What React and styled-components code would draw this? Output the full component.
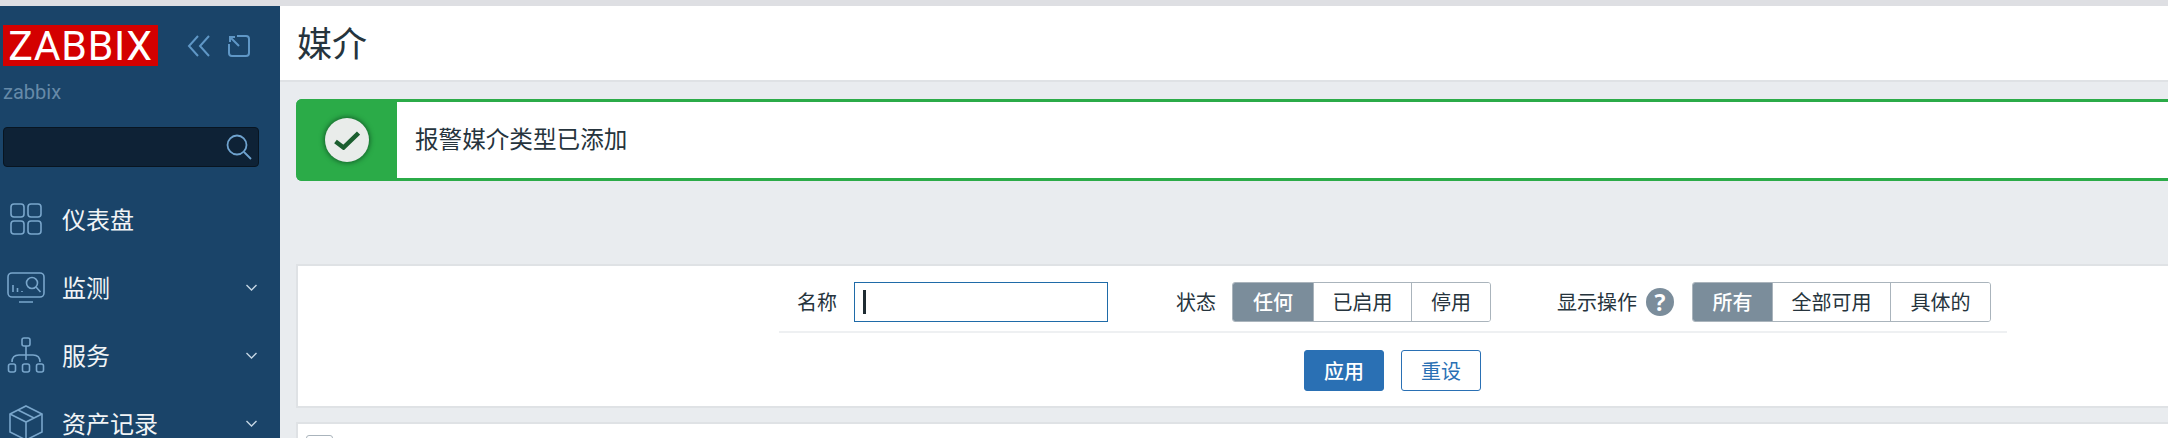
import { createGlobalStyle, styled } from "styled-components";

const GlobalStyle = createGlobalStyle`
  html, body {
    margin: 0;
    height: 100%;
    overflow: hidden;
    background-color: #e9ecef;
  }
  body {
    font-family: "Noto Sans CJK SC", "Noto Sans", sans-serif;
    color: #1f2c33;
  }
  * {
    box-sizing: border-box;
  }
`;

const Page = styled.div`
  display: flex;
  flex-direction: column;
  height: 438px;
  overflow: hidden;
`;

const TopStrip = styled.div`
  flex: none;
  height: 6px;
  background-color: #dedfe3;
`;

const Body = styled.div`
  flex: 1;
  display: flex;
  min-height: 0;
`;

const Sidebar = styled.aside`
  flex: none;
  width: 280px;
  padding: 19px 21px 0 3px;
  background-color: #1a4469;
  overflow: hidden;
`;

const BrandRow = styled.div`
  display: flex;
  align-items: center;
  height: 41px;
`;

const Logo = styled.div`
  width: 155px;
  height: 41px;
  background-color: #d40000;
  color: #fff;
  font-family: Roboto, sans-serif;
  font-size: 41px;
  font-weight: 400;
  line-height: 42px;
  letter-spacing: 0.8px;
  text-align: center;
`;

const BrandIcon = styled.svg`
  flex: none;
  margin-left: ${({ $gap }) => $gap}px;
  fill: none;
  stroke: #5f97c6;
  stroke-width: 2;
`;

const ServerName = styled.div`
  margin-top: 11px;
  height: 30px;
  font-family: Roboto, sans-serif;
  font-size: 20px;
  line-height: 30px;
  color: #668aa8;
`;

const SearchBox = styled.div`
  display: flex;
  align-items: center;
  justify-content: flex-end;
  height: 40px;
  margin-top: 20px;
  padding-right: 6px;
  background-color: #0e2236;
  border: 1px solid #081521;
  border-radius: 4px;
`;

const NavList = styled.nav`
  display: flex;
  flex-direction: column;
  margin-top: 18px;
  margin-right: -21px;
`;

const NavRow = styled.div`
  display: flex;
  align-items: center;
  height: 68px;
  padding-left: 4px;
`;

const NavIconSlot = styled.div`
  flex: none;
  display: flex;
  justify-content: center;
  width: 38px;
  margin-right: 17px;
`;

const NavIcon = styled.svg`
  fill: none;
  stroke: #79a6cb;
  stroke-width: 1.6;
`;

const NavLabel = styled.span`
  flex: 1;
  font-size: 24px;
  line-height: 26px;
  color: #f1f4f6;
`;

const Chevron = styled.svg`
  flex: none;
  margin-right: 23px;
  fill: none;
  stroke: #c5d6e4;
  stroke-width: 1.4;
`;

const Main = styled.main`
  flex: 1;
  min-width: 0;
  overflow: hidden;
`;

const Header = styled.header`
  height: 76px;
  padding-left: 17px;
  background-color: #fff;
  border-bottom: 2px solid #dfe2e5;
`;

const Title = styled.h1`
  margin: 0;
  font-size: 35px;
  font-weight: 400;
  line-height: 71px;
  color: #26343d;
`;

const Content = styled.div`
  padding: 17px 0 0 16px;
`;

const Alert = styled.div`
  display: flex;
  height: 82px;
  background-color: #fff;
  border-top: 3px solid #2bab48;
  border-bottom: 3px solid #2bab48;
  border-radius: 6px 0 0 6px;
`;

const AlertSide = styled.div`
  flex: none;
  display: flex;
  align-items: center;
  justify-content: center;
  width: 101px;
  margin: -3px 0;
  background-color: #2bab48;
  border-radius: 6px 0 0 6px;
`;

const CheckCircle = styled.div`
  display: flex;
  align-items: center;
  justify-content: center;
  width: 44px;
  height: 44px;
  border-radius: 50%;
  background-color: #e9ecea;
  box-shadow: 0 0 5px 1px #14602a;
`;

const AlertText = styled.div`
  margin-left: 18px;
  font-size: 23.6px;
  line-height: 72px;
  color: #26343d;
`;

const Panel = styled.section`
  margin-top: ${({ $top }) => $top}px;
  height: ${({ $height }) => $height}px;
  padding-left: ${({ $indent }) => $indent}px;
  background-color: #fff;
  border: 2px solid #dfe2e5;
  border-right: 0;
  ${({ $open }) => $open && "border-bottom: 0;"}
`;

const FilterForm = styled.form`
  width: 1228px;
`;

const FilterRow = styled.div`
  display: flex;
  align-items: center;
  height: 67px;
  padding: 16px 0 9px 18px;
  border-bottom: 2px solid #eef0f2;
`;

const FieldLabel = styled.label`
  flex: none;
  margin-left: ${({ $gap }) => $gap}px;
  font-size: 20px;
  line-height: 28px;
  color: #26343d;
`;

const TextBox = styled.div`
  flex: none;
  display: flex;
  align-items: center;
  width: 254px;
  height: 40px;
  margin-left: 17px;
  padding-left: 8px;
  border: 1.5px solid #1f6ba8;
`;

const Caret = styled.span`
  width: 2.5px;
  height: 24px;
  background-color: #1f2c33;
`;

const HelpBadge = styled.span`
  flex: none;
  width: 28px;
  height: 28px;
  margin-left: 9px;
  border-radius: 50%;
  background-color: #7b8d9b;
  color: #fff;
  font-family: "Open Sans", sans-serif;
  font-size: 23px;
  font-weight: 700;
  line-height: 28px;
  text-align: center;
`;

const Segments = styled.div`
  flex: none;
  display: flex;
  height: 40px;
  margin-left: ${({ $gap }) => $gap}px;
  border: 1px solid #aab4bc;
  border-radius: 3px;
  overflow: hidden;
`;

const Segment = styled.div`
  width: ${({ $width }) => $width}px;
  background-color: ${({ $active }) => ($active ? "#7b8d9b" : "#fff")};
  color: ${({ $active }) => ($active ? "#fff" : "#26343d")};
  font-size: 20px;
  font-weight: ${({ $active }) => ($active ? 500 : 400)};
  line-height: 38px;
  text-align: center;
  & + & {
    border-left: 1px solid #aab4bc;
  }
`;

const FilterActions = styled.div`
  display: flex;
  justify-content: flex-start;
  gap: 17px;
  padding: 17px 0 0 525px;
`;

const ActionButton = styled.button`
  width: 80px;
  height: 41px;
  padding: 0;
  border: 1px solid #2a70b4;
  border-radius: 3px;
  background-color: ${({ $primary }) => ($primary ? "#2a70b4" : "#fff")};
  color: ${({ $primary }) => ($primary ? "#fff" : "#2a70b4")};
  font-family: inherit;
  font-size: 20px;
  font-weight: ${({ $primary }) => ($primary ? 500 : 400)};
`;

const HeaderCheckbox = styled.div`
  width: 27px;
  height: 27px;
  margin-top: 11px;
  background-color: #fff;
  border: 1.5px solid #aab4bc;
  border-radius: 3px;
`;

const DashboardIcon = () => (
  <NavIcon width="32" height="32" viewBox="0 0 32 32">
    <rect x="1" y="1" width="13" height="13" rx="3" />
    <rect x="18" y="1" width="13" height="13" rx="3" />
    <rect x="1" y="18" width="13" height="13" rx="3" />
    <rect x="18" y="18" width="13" height="13" rx="3" />
  </NavIcon>
);

const MonitorIcon = () => (
  <NavIcon width="38" height="31" viewBox="0 0 38 31">
    <rect x="1" y="1" width="36" height="24" rx="4" />
    <path d="M12 30h14M6 20v-7M10.5 20v-4M15 20v-1" />
    <circle cx="25" cy="11" r="5.5" />
    <path d="M29 15l4.5 5" />
  </NavIcon>
);

const ServicesIcon = () => (
  <NavIcon width="38" height="36" viewBox="0 0 38 36">
    <rect x="15" y="1" width="8" height="8" rx="2" />
    <path d="M19 9v14M5 25c0-5 3-7 7-7h14c4 0 7 2 7 7" />
    <rect x="1.5" y="27" width="7" height="8" rx="2" />
    <rect x="15.5" y="27" width="7" height="8" rx="2" />
    <rect x="29.5" y="27" width="7" height="8" rx="2" />
  </NavIcon>
);

const InventoryIcon = () => (
  <NavIcon width="34" height="36" viewBox="0 0 34 36">
    <path d="M17 1L33 9v18L17 35 1 27V9z" />
    <path d="M1 9l16 8 16-8M17 17v18M9 5l16 8" />
  </NavIcon>
);

const navItems = [
  { label: "仪表盘", Icon: DashboardIcon },
  { label: "监测", Icon: MonitorIcon, more: true },
  { label: "服务", Icon: ServicesIcon, more: true },
  { label: "资产记录", Icon: InventoryIcon, more: true },
];

export default function App() {
  return (
    <Page>
      <GlobalStyle />
      <TopStrip />
      <Body>
        <Sidebar>
          <BrandRow>
            <Logo>ZABBIX</Logo>
            <BrandIcon $gap={29} width="24" height="22" viewBox="0 0 24 22">
              <path d="M11 1L2 11l9 10M22 1l-9 10 9 10" />
            </BrandIcon>
            <BrandIcon $gap={17} width="22" height="22" viewBox="0 0 22 22">
              <path d="M9 1h9a3 3 0 0 1 3 3v14a3 3 0 0 1-3 3H4a3 3 0 0 1-3-3V9" />
              <path d="M2 7V2h5M2 2l9 9" />
            </BrandIcon>
          </BrandRow>
          <ServerName>zabbix</ServerName>
          <SearchBox>
            <svg width="26" height="26" viewBox="0 0 26 26" fill="none" stroke="#6fa3cf" strokeWidth="1.8">
              <circle cx="11" cy="11" r="9.5" />
              <path d="M18 18l7 7" />
            </svg>
          </SearchBox>
          <NavList>
            {navItems.map(({ label, Icon, more }) => (
              <NavRow key={label}>
                <NavIconSlot>
                  <Icon />
                </NavIconSlot>
                <NavLabel>{label}</NavLabel>
                {more && (
                  <Chevron width="11" height="7" viewBox="0 0 11 7">
                    <path d="M0.5 1l5 5 5-5" />
                  </Chevron>
                )}
              </NavRow>
            ))}
          </NavList>
        </Sidebar>
        <Main>
          <Header>
            <Title>媒介</Title>
          </Header>
          <Content>
            <Alert>
              <AlertSide>
                <CheckCircle>
                  <svg width="26" height="19" viewBox="0 0 26 19" fill="none" stroke="#1b5e2f" strokeWidth="4.5">
                    <path d="M1.5 10.5l8 6L24.5 2" />
                  </svg>
                </CheckCircle>
              </AlertSide>
              <AlertText>报警媒介类型已添加</AlertText>
            </Alert>
            <Panel $top={83} $height={144} $indent={481}>
              <FilterForm>
                <FilterRow>
                  <FieldLabel $gap={0}>名称</FieldLabel>
                  <TextBox>
                    <Caret />
                  </TextBox>
                  <FieldLabel $gap={68}>状态</FieldLabel>
                  <Segments $gap={16}>
                    <Segment $active $width={80}>任何</Segment>
                    <Segment $width={98}>已启用</Segment>
                    <Segment $width={79}>停用</Segment>
                  </Segments>
                  <FieldLabel $gap={66}>显示操作</FieldLabel>
                  <HelpBadge>?</HelpBadge>
                  <Segments $gap={18}>
                    <Segment $active $width={79}>所有</Segment>
                    <Segment $width={118}>全部可用</Segment>
                    <Segment $width={100}>具体的</Segment>
                  </Segments>
                </FilterRow>
                <FilterActions>
                  <ActionButton type="button" $primary>应用</ActionButton>
                  <ActionButton type="button">重设</ActionButton>
                </FilterActions>
              </FilterForm>
            </Panel>
            <Panel $top={14} $height={60} $indent={8} $open>
              <HeaderCheckbox />
            </Panel>
          </Content>
        </Main>
      </Body>
    </Page>
  );
}
